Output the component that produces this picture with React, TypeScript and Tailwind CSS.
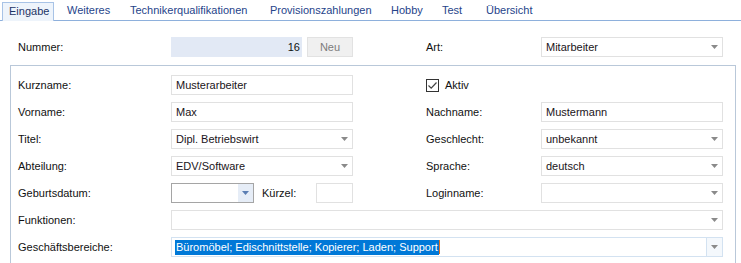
import React from "react";

const Arrow = ({ color = "#8a8a8a" }: { color?: string }) => (
  <svg width="7" height="4" viewBox="0 0 7 4" className="block">
    <path d="M0 0H7L3.5 4Z" fill={color} />
  </svg>
);

const TextBox = ({ value = "", className = "" }: { value?: string; className?: string }) => (
  <div className={`h-5 border border-[#e1e1e1] bg-white flex items-center px-[4px] text-[#1a1420] ${className}`}>
    {value}
  </div>
);

const Combo = ({ value = "", className = "" }: { value?: string; className?: string }) => (
  <div className={`h-5 border border-[#e1e1e1] bg-white flex items-center pl-[4px] pr-[4px] text-[#1a1420] ${className}`}>
    <span className="flex-1">{value}</span>
    <Arrow />
  </div>
);

const Label = ({ text, className = "" }: { text: string; className?: string }) => (
  <div className={`text-[#111] ${className}`}>{text}</div>
);

// fixed tab widths so the captions land where the original puts them
const tabs = [
  { t: "Weiteres", w: "w-[63px]" },
  { t: "Technikerqualifikationen", w: "w-[140px]" },
  { t: "Provisionszahlungen", w: "w-[121px]" },
  { t: "Hobby", w: "w-[51px]" },
  { t: "Test", w: "w-[44px]" },
  { t: "Übersicht", w: "w-[80px]" },
];

export default function App() {
  return (
    <div className="w-[741px] h-[263px] overflow-hidden bg-white text-[11px] leading-none" style={{ fontFamily: '"Liberation Sans", Arial, sans-serif' }}>
      {/* Tabs */}
      <div className="flex items-end h-[21px] border-b border-[#8eb0dc] pl-[2px]">
        <div className="h-[19px] w-[52px] pl-[6px] flex items-center border border-b-0 border-[#a8c3e6] bg-[#eef4fb] text-[#1d3566] -mb-px pb-px">
          Eingabe
        </div>
        <div className="ml-[13px] flex">
          {tabs.map(({ t, w }) => (
            <div key={t} className={`h-[19px] flex items-center text-[#26448a] ${w}`}>
              {t}
            </div>
          ))}
        </div>
      </div>

      {/* Nummer / Art */}
      <div className="flex items-center pl-[18px] mt-[16px] h-5">
        <Label text="Nummer:" className="w-[153px]" />
        <div className="w-[131px] h-5 bg-[#e2e9f5] flex items-center justify-end pr-[2px] text-[#111]">16</div>
        <div className="w-[46px] h-5 ml-[5px] bg-[#f0f0f0] border border-[#e2e2e2] flex items-center justify-center text-[#7c7c7c]">Neu</div>
        <Label text="Art:" className="ml-[73px] w-[115px]" />
        <Combo value="Mitarbeiter" className="w-[182px]" />
      </div>

      {/* Frame */}
      <div className="ml-[10px] mr-[5px] mt-[8px] border border-[#b9c8d9] pt-[9px] pb-10 pl-[7px] flex flex-col gap-[7px]">
        <div className="flex items-center">
          <Label text="Kurzname:" className="w-[153px]" />
          <TextBox value="Musterarbeiter" className="w-[182px]" />
          <div className="ml-[73px] flex items-center">
            <div className="w-[13px] h-[13px] border border-[#333] flex items-center justify-center">
              <svg width="11" height="11" viewBox="0 0 11 11">
                <path d="M1.5 5.5L4.2 8.2L9.5 2.5" stroke="#444" strokeWidth="1.2" fill="none" />
              </svg>
            </div>
            <span className="ml-[6px] text-[#111]">Aktiv</span>
          </div>
        </div>
        <div className="flex items-center">
          <Label text="Vorname:" className="w-[153px]" />
          <TextBox value="Max" className="w-[182px]" />
          <Label text="Nachname:" className="ml-[73px] w-[115px]" />
          <TextBox value="Mustermann" className="w-[182px]" />
        </div>
        <div className="flex items-center">
          <Label text="Titel:" className="w-[153px]" />
          <Combo value="Dipl. Betriebswirt" className="w-[182px]" />
          <Label text="Geschlecht:" className="ml-[73px] w-[115px]" />
          <Combo value="unbekannt" className="w-[182px]" />
        </div>
        <div className="flex items-center">
          <Label text="Abteilung:" className="w-[153px]" />
          <Combo value="EDV/Software" className="w-[182px]" />
          <Label text="Sprache:" className="ml-[73px] w-[115px]" />
          <Combo value="deutsch" className="w-[182px]" />
        </div>
        <div className="flex items-center">
          <Label text="Geburtsdatum:" className="w-[153px]" />
          <div className="w-[83px] h-5 border border-[#a5a5a5] bg-white flex justify-end">
            <div className="w-[15px] h-full bg-[#e6edf7] flex items-center justify-center">
              <Arrow color="#5b7eb3" />
            </div>
          </div>
          <Label text="Kürzel:" className="ml-[8px] w-[54px]" />
          <TextBox className="w-[37px]" />
          <Label text="Loginname:" className="ml-[73px] w-[115px]" />
          <Combo className="w-[182px]" />
        </div>
        <div className="flex items-center">
          <Label text="Funktionen:" className="w-[153px]" />
          <Combo className="w-[552px]" />
        </div>
        <div className="flex items-center">
          <Label text="Geschäftsbereiche:" className="w-[153px]" />
          <div className="w-[552px] h-5 border border-[#d3e2f1] bg-white flex items-center">
            <div className="flex-1 pl-[3px] flex items-center">
              <span className="bg-[#0078d7] text-white px-px py-[2px]">Büromöbel; Edischnittstelle; Kopierer; Laden; Support</span>
              <span className="w-px h-[14px] bg-[#e07020]" />
            </div>
            <div className="w-[16px] h-full border-l border-[#d3e2f1] bg-[#f4f8fc] flex items-center justify-center">
              <Arrow />
            </div>
          </div>
        </div>
      </div>
    </div>
  );
}
